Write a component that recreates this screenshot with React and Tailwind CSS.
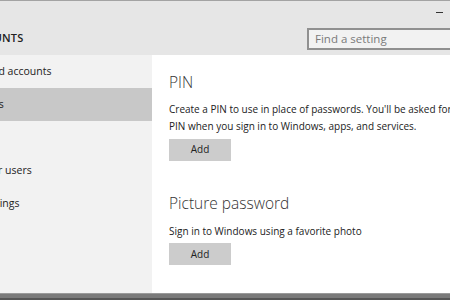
import React from 'react';

const items = [
  'Your email and accounts',
  'Sign-in options',
  'Work access',
  'Family & other users',
  'Sync your settings',
];

const App = () => {
  return (
    <div
      className="w-[450px] h-[300px] overflow-hidden flex flex-col bg-[#e6e6e6] border-t border-[#a3a3a3]"
      style={{ fontFamily: '"Open Sans", "Noto Sans", sans-serif' }}
    >
      <div className="flex-1 flex flex-col ml-[-81px] w-[531px] min-h-0">
        {/* Title bar */}
        <div className="h-[21px] flex items-center justify-between pr-[7px] shrink-0">
          <span className="pl-[38px] text-[10px] text-[#222]">Settings</span>
          <span className="w-[7px] h-[1px] bg-[#333] mt-[1px]"></span>
        </div>

        {/* Header */}
        <div className="h-[33px] flex items-center justify-between shrink-0">
          <span className="pl-[44px] text-[11px] font-semibold tracking-[0.2px] text-[#222]">ACCOUNTS</span>
          <div className="w-[143px] h-[22px] border-2 border-r-0 border-[#909090] bg-[#f2f2f2] flex items-center pl-[6px]">
            <span className="text-[11.5px] text-[#7a7a7a]">Find a setting</span>
          </div>
        </div>

        {/* Body */}
        <div className="flex-1 flex min-h-0">
          <div className="w-[233px] shrink-0 bg-[#f2f2f2] flex flex-col">
            {items.map((item, i) => (
              <div
                key={item}
                className={`h-[33px] flex items-center pl-[12px] text-[10.5px] text-[#222] ${i === 1 ? 'bg-[#c8c8c8]' : ''}`}
              >
                {item}
              </div>
            ))}
          </div>

          <div className="flex-1 min-w-0 bg-white pl-[17px] pt-[16px]">
            <h2 className="text-[15.5px] font-light text-[#333] leading-[22px]">PIN</h2>
            <p className="mt-[8px] text-[10px] leading-[17px] text-[#222] whitespace-nowrap">
              Create a PIN to use in place of passwords. You'll be asked for this
              <br />
              PIN when you sign in to Windows, apps, and services.
            </p>
            <button className="mt-[1px] w-[62px] h-[22px] bg-[#cccccc] text-[10px] text-[#222]">Add</button>

            <h2 className="mt-[31px] text-[15.5px] font-light text-[#333] leading-[22px]">Picture password</h2>
            <p className="mt-[9px] text-[10px] leading-[17px] text-[#222]">
              Sign in to Windows using a favorite photo
            </p>
            <button className="mt-[3px] w-[62px] h-[22px] bg-[#cccccc] text-[10px] text-[#222]">Add</button>
          </div>
        </div>
      </div>

      {/* Taskbar edge */}
      <div className="h-[7px] shrink-0 flex flex-col">
        <div className="h-[1px] bg-[#9a9a9a]"></div>
        <div className="h-[4px] bg-[#7a7a7a]"></div>
        <div className="h-[2px] bg-[#555]"></div>
      </div>
    </div>
  );
};

export default App;
